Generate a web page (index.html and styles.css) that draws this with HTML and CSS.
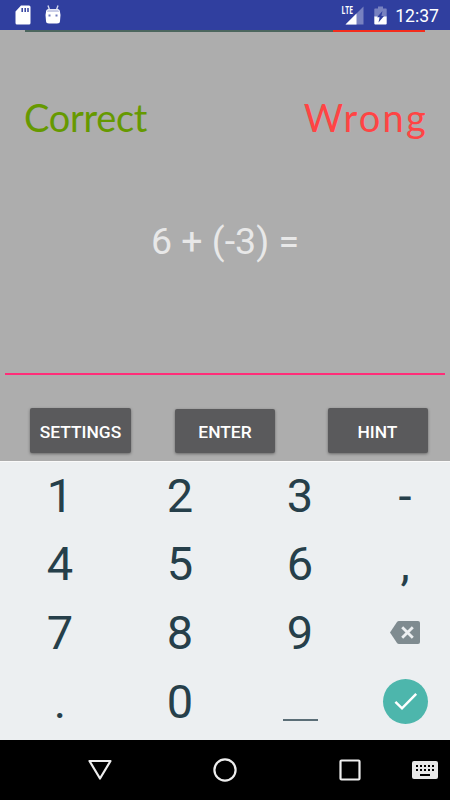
FILE: index.html
```html
<!DOCTYPE html>
<html lang="en">
<head>
    <meta charset="UTF-8">
    <meta name="viewport" content="width=device-width, initial-scale=1.0">
    <title>Math Practice</title>
    <link rel="stylesheet" href="styles.css">
</head>
<body>
    <div class="status-bar">
        <svg class="sd-icon" width="16" height="20" viewBox="0 0 16 20">
            <path fill="#fff" d="M6 0.5h8a1.5 1.5 0 0 1 1.5 1.5v16a1.5 1.5 0 0 1-1.5 1.5H2A1.5 1.5 0 0 1 .5 18V6.5z"/>
            <path stroke="#303f9f" stroke-width="1.5" d="M7.2 3v4M10.2 3v4M13 3v4"/>
        </svg>
        <svg class="bug-icon" width="16" height="19" viewBox="0 0 16 19">
            <path stroke="#d5d9ed" stroke-width="1.4" d="M3 .5l1.400 4M13 .5l-1.400 4"/>
            <path fill="#fff" d="M1 7q0-3 3-3h8q3 0 3 3l.5 3-.5 6q0 2.500-3 2.500H4Q1 18.500 1 16L.5 10z"/>
            <path fill="#c9cde6" d="M2 7q0-2.600 3-2.600h6q3 0 3 2.600z"/>
            <path fill="#6f7abb" d="M3.500 9.500h2v2h-2zM10.500 9.500h2v2h-2z"/>
        </svg>
        <svg class="signal-icon" width="23" height="19" viewBox="0 0 23 19">
            <path fill="#7882c0" d="M22.500.5v18h-18z"/>
            <path fill="#fff" d="M15.500 7.500v11h-11z"/>
            <path fill="#303f9f" d="M0 0h13v9H0z"/>
            <text class="lte" x="0.500" y="8" textLength="11.500" lengthAdjust="spacingAndGlyphs">LTE</text>
        </svg>
        <svg class="battery-icon" width="13" height="19" viewBox="0 0 13 19">
            <path fill="#7882c0" d="M4 .5h5v2h3q.7 0 .7.700V11H.300V3.200q0-.7.700-.7h3z"/>
            <path fill="#fff" d="M.300 10.500h12.400v7q0 1-1 1H1.300q-1 0-1-1z"/>
            <path fill="#303f9f" d="M8.500 5L3 11.300h2.600L4.500 16.500 10 10H7.400z"/>
        </svg>
        <span class="clock">12:37</span>
    </div>

    <div class="quiz">
        <div class="progress">
            <div class="progress-correct"></div>
            <div class="progress-wrong"></div>
        </div>
        <div class="score">
            <span class="correct">Correct</span>
            <span class="wrong">Wrong</span>
        </div>
        <div class="question">6 + (-3) =</div>
        <div class="answer"></div>
        <div class="actions">
            <button class="settings">SETTINGS</button>
            <button class="enter">ENTER</button>
            <button class="hint">HINT</button>
        </div>
    </div>

    <div class="keypad">
        <div>1</div>
        <div>2</div>
        <div>3</div>
        <div>-</div>
        <div>4</div>
        <div>5</div>
        <div>6</div>
        <div>,</div>
        <div>7</div>
        <div>8</div>
        <div>9</div>
        <div>
            <svg width="30" height="23" viewBox="0 0 30 23">
                <path fill="#7f8b90" d="M9 0h19q2 0 2 2v19q0 2-2 2H9q-1.300 0-2-1L0 11.500 7 1q.7-1 2-1z"/>
                <path stroke="#eceff1" stroke-width="2.800" d="M12.200 6.200l10.600 10.600M22.800 6.200L12.200 16.800"/>
            </svg>
        </div>
        <div>.</div>
        <div>0</div>
        <div><span class="space"></span></div>
        <div>
            <svg width="45" height="45" viewBox="0 0 45 45">
                <circle cx="22.500" cy="22.500" r="22.500" fill="#4db6ac"/>
                <path fill="none" stroke="#fff" stroke-width="2.500" d="M12.400 22.900l6.600 6.400L33.200 14.800"/>
            </svg>
        </div>
    </div>

    <div class="nav-bar">
        <svg width="24" height="24" viewBox="0 0 24 24">
            <path fill="none" stroke="#eee" stroke-width="2.200" stroke-linejoin="round" d="M1.500 3h21L12 20.500z"/>
        </svg>
        <svg width="24" height="24" viewBox="0 0 24 24">
            <circle cx="12" cy="12" r="10.600" fill="none" stroke="#eee" stroke-width="2.200"/>
        </svg>
        <svg width="24" height="24" viewBox="0 0 24 24">
            <rect x="2.500" y="2.500" width="19" height="19" rx="1" fill="none" stroke="#eee" stroke-width="2.200"/>
        </svg>
        <svg class="keyboard-icon" width="26" height="18" viewBox="0 0 26 18">
            <rect width="26" height="18" rx="2" fill="#e8e8e8"/>
            <path stroke="#000" stroke-width="2" stroke-dasharray="2 2" d="M4 5h18M4 9h18"/>
            <path stroke="#000" stroke-width="2" d="M8 14h10"/>
        </svg>
    </div>
</body>
</html>
```

FILE: styles.css
```css
body {
    margin: 0;
    width: 450px;
    height: 800px;
    overflow: hidden;
    display: flex;
    flex-direction: column;
    font-family: Roboto, sans-serif;
    background: #adadad;
}

svg {
    display: block;
    flex-shrink: 0;
    overflow: visible;
}

.status-bar {
    box-sizing: border-box;
    height: 30px;
    padding: 0 11px 0 15px;
    display: flex;
    align-items: center;
    background: #303f9f;
    color: #fff;
}

.bug-icon {
    margin-left: 14px;
    margin-bottom: 2px;
}

.signal-icon {
    margin-left: auto;
}

.battery-icon {
    margin: 0 8px 0 10px;
}

.lte {
    font: bold 10.5px "Open Sans", sans-serif;
    fill: #fff;
}

.clock {
    font-size: 17.6px;
    line-height: 28px;
    padding-top: 2px;
}

.quiz {
    height: 431px;
    display: flex;
    flex-direction: column;
    background: #adadad;
}

.progress {
    height: 1.5px;
    margin: 0 25px;
    display: flex;
}

.progress-correct {
    flex: 1;
    background: #4c665e;
}

.progress-wrong {
    width: 92px;
    background: #f52c1c;
}

.score {
    display: flex;
    justify-content: space-between;
    height: 60px;
    margin: 57.5px 24px 0;
    font-family: "Coming Soon", Lato, sans-serif;
    font-size: 38px;
    line-height: 56px;
}

.correct {
    color: #669900;
    letter-spacing: -0.3px;
}

.wrong {
    color: #ff4444;
    letter-spacing: 2.2px;
    margin-right: -2px;
}

.question {
    margin-top: 61px;
    height: 60px;
    line-height: 62px;
    font-size: 37.5px;
    text-align: center;
    color: #e8e8e8;
}

.answer {
    height: 2px;
    margin: 103px 5px 0;
    background: #ff2d78;
}

.actions {
    display: flex;
    align-items: flex-end;
    margin: 33px 22.5px 0 30px;
    height: 45px;
}

button {
    width: 100px;
    height: 45px;
    padding: 2px 0 0;
    border: none;
    border-radius: 2px;
    background: #5a5a5c;
    color: #fff;
    font: 500 17.4px Roboto, sans-serif;
    box-shadow: 0 1px 3px rgba(0, 0, 0, 0.4);
}

.settings {
    width: 101px;
}

.enter {
    height: 44px;
    margin-left: 44px;
}

.hint {
    margin-left: auto;
}

.keypad {
    box-sizing: border-box;
    height: 279px;
    border-top: 1px solid #fafafa;
    display: grid;
    grid-template-columns: 120px 120px 120px 90px;
    grid-template-rows: 66.5px repeat(3, 69px);
    background: #eceff1;
    color: #263f4a;
    font-size: 47px;
}

.keypad div {
    display: flex;
    align-items: center;
    justify-content: center;
}

.space {
    width: 35px;
    height: 2px;
    margin-top: 38px;
    background: #5b6e77;
}

.nav-bar {
    height: 60px;
    padding: 0 12px 0 88px;
    display: flex;
    align-items: center;
    gap: 101px;
    background: #000;
}

.keyboard-icon {
    margin-left: -51px;
}
```
